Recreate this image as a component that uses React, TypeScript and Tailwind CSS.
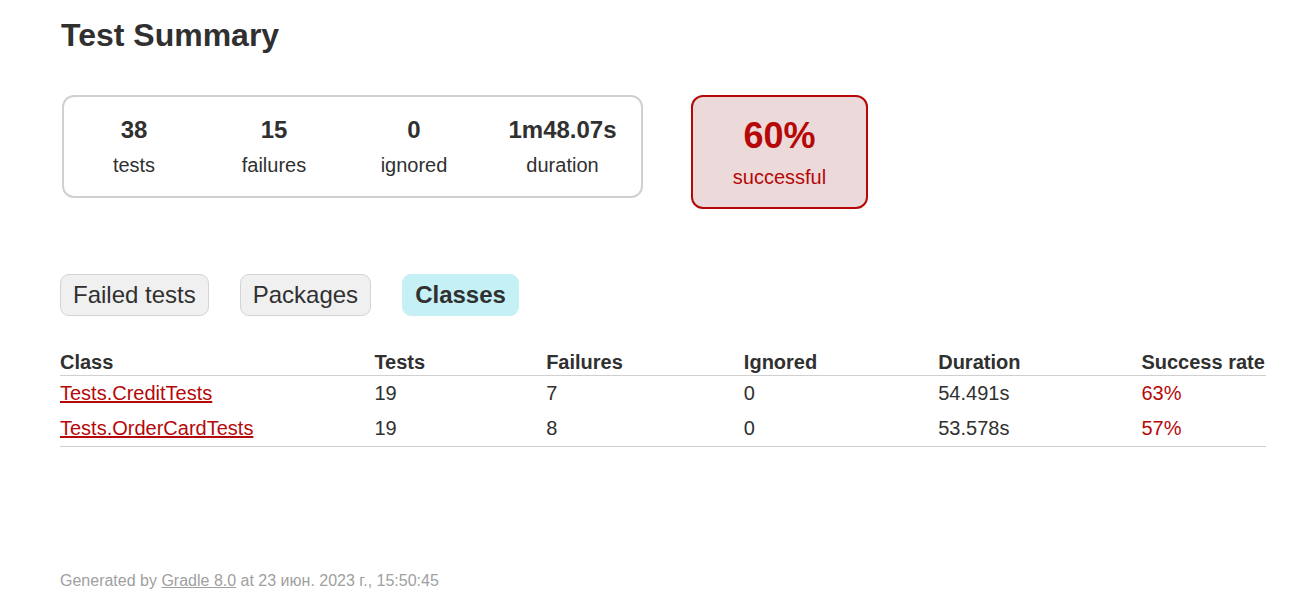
const counters = [
  { value: "38", label: "tests", width: "w-[140px]" },
  { value: "15", label: "failures", width: "w-[140px]" },
  { value: "0", label: "ignored", width: "w-[140px]" },
  { value: "1m48.07s", label: "duration", width: "w-[157px]" },
];

const tabs = [
  { name: "Failed tests", selected: false },
  { name: "Packages", selected: false },
  { name: "Classes", selected: true },
];

const classes = [
  { name: "Tests.CreditTests", tests: 19, failures: 7, ignored: 0, duration: "54.491s", rate: "63%" },
  { name: "Tests.OrderCardTests", tests: 19, failures: 8, ignored: 0, duration: "53.578s", rate: "57%" },
];

const headers = ["Class", "Tests", "Failures", "Ignored", "Duration", "Success rate"];

export default function App() {
  return (
    <div className="min-h-screen bg-white px-[60px] pt-[17px] pb-[30px] font-['Liberation_Sans',Arial,sans-serif] text-[20px] text-[#303030]">
      <h1 className="ml-[1px] whitespace-nowrap text-[32px] font-bold leading-[37px]">Test Summary</h1>

      {/* Summary */}
      <div className="mt-[41px] flex items-start">
        <div className="ml-[2px] flex rounded-[12px] border-2 border-[#d0d0d0]">
          {counters.map((c) => (
            <div key={c.label} className={`${c.width} pt-[19px] pb-[19px] text-center`}>
              <div className="mb-[10px] text-[24px] font-bold leading-[28px]">{c.value}</div>
              <div className="leading-[23px]">{c.label}</div>
            </div>
          ))}
        </div>
        <div className="ml-[48px] w-[177px] rounded-[12px] border-2 border-[#b60808] bg-[#ecdada] pt-[18px] pb-[18px] text-center text-[#b60808]">
          <div className="mb-[10px] text-[36px] font-bold leading-[41px]">60%</div>
          <div className="leading-[23px]">successful</div>
        </div>
      </div>

      {/* Tabs */}
      <ul className="mt-[65px] flex gap-[31px]">
        {tabs.map((t) => (
          <li
            key={t.name}
            className={`rounded-[9px] border px-[12px] py-[6px] text-[24px] leading-[28px] ${
              t.selected ? "border-[#c5f0f5] bg-[#c5f0f5] font-bold" : "border-[#d4d4d4] bg-[#f0f0f0]"
            }`}
          >
            {t.name}
          </li>
        ))}
      </ul>

      {/* Classes table */}
      <table className="mt-[34px] border-collapse border-b border-[#d0d0d0]">
        <thead>
          <tr>
            {headers.map((h, i) => (
              <th
                key={h}
                className={`whitespace-nowrap border-b border-[#d0d0d0] py-[1px] pr-[1px] text-left font-bold leading-[23px] ${
                  i === 0 ? "pl-0" : "pl-[120px]"
                }`}
              >
                {h}
              </th>
            ))}
          </tr>
        </thead>
        <tbody>
          {classes.map((c) => (
            <tr key={c.name}>
              <td className="whitespace-nowrap py-[6px] pr-[1px] pl-0 leading-[23px]">
                <a href="#" className="text-[#b60808] underline">
                  {c.name}
                </a>
              </td>
              <td className="whitespace-nowrap py-[6px] pr-[1px] pl-[120px] leading-[23px]">{c.tests}</td>
              <td className="whitespace-nowrap py-[6px] pr-[1px] pl-[120px] leading-[23px]">{c.failures}</td>
              <td className="whitespace-nowrap py-[6px] pr-[1px] pl-[120px] leading-[23px]">{c.ignored}</td>
              <td className="whitespace-nowrap py-[6px] pr-[1px] pl-[120px] leading-[23px]">{c.duration}</td>
              <td className="whitespace-nowrap py-[6px] pr-[1px] pl-[120px] leading-[23px] text-[#b60808]">{c.rate}</td>
            </tr>
          ))}
        </tbody>
      </table>

      {/* Footer */}
      <div className="mt-[125px] whitespace-nowrap text-[16px] leading-[18px] text-[#a0a0a0]">
        Generated by{" "}
        <a href="#" className="text-[#a0a0a0] underline">
          Gradle 8.0
        </a>{" "}
        at 23 июн. 2023 г., 15:50:45
      </div>
    </div>
  );
}
